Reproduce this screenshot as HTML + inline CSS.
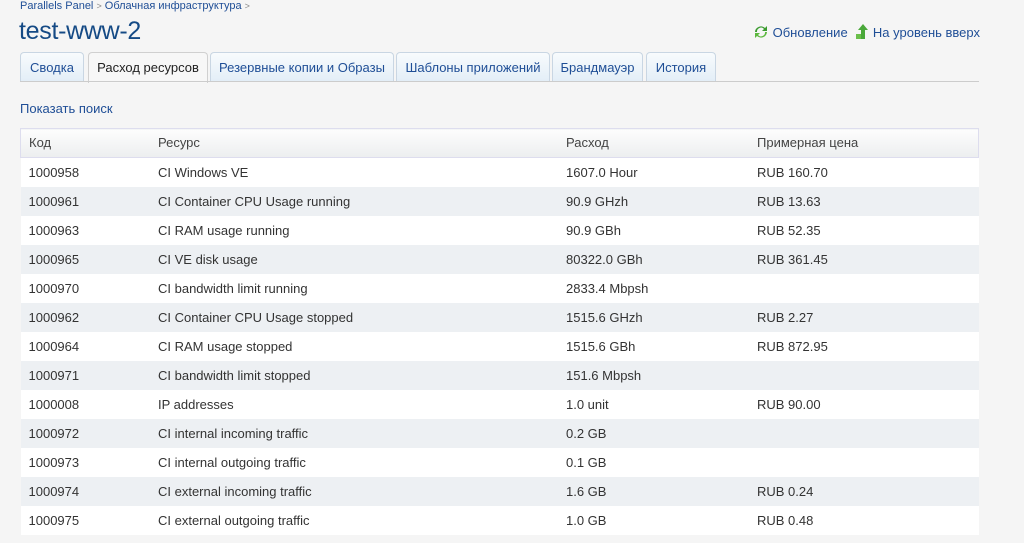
<!DOCTYPE html>
<html><head><meta charset="utf-8"><style>
body{margin:0;background:#f5f5f5;font-family:"Liberation Sans","DejaVu Sans",sans-serif;font-size:13px;color:#333;width:1024px;height:543px;overflow:hidden;position:relative}
a{color:#1f4e96;text-decoration:none}
.bc{position:absolute;left:20px;top:0;font-size:11px;color:#1f4e96}
.bc span{color:#888;font-size:9px}
h1{position:absolute;left:19px;top:17px;margin:0;font-weight:normal;font-size:25px;color:#154a85;letter-spacing:-0.3px}
.tr{position:absolute;right:44px;top:24px;font-size:13px}
.tr a{margin-left:4px}
.tab{position:absolute;top:52px;height:29px;line-height:29px;text-align:center;border:1px solid #c9d6e3;border-bottom:none;border-radius:4px 4px 0 0;background:linear-gradient(#f8fbfd,#e3eef7);color:#1f4e96;font-size:13px;box-sizing:border-box}
.tab.act{background:#f7f7f7;color:#222;border-color:#d0d0d0;height:31px}
.line{position:absolute;left:20px;top:81px;width:959px;height:1px;background:#ccc}
.ss{position:absolute;left:20px;top:101px}
table{position:absolute;left:20px;top:128px;width:959px;border-collapse:collapse}
td,th{height:28px;padding:0 0 1px 8px;text-align:left;font-weight:normal;font-size:13px;color:#333}
th{height:27px;background:linear-gradient(#fdfdfd,#eceeef);border-top:1px solid #dde;border-bottom:1px solid #dde;color:#444}
th:first-child{border-left:1px solid #dde}
th:last-child{border-right:1px solid #dde}
tr:nth-child(even) td{background:#fff}
tr:nth-child(odd) td{background:#edf0f3}
</style></head><body>
<div class="bc"><a>Parallels Panel</a> <span>&gt;</span> <a>Облачная инфраструктура</a> <span>&gt;</span></div>
<h1>test-www-2</h1>
<div class="tr"><svg width="16" height="14" viewBox="0 0 16 14" style="vertical-align:-2px"><path d="M2 7a6 6 0 0 1 10-4l2-2v5h-5l2-2a4 4 0 0 0-7 3z" fill="#3a9b2e"/><path d="M14 7a6 6 0 0 1-10 4l-2 2V8h5l-2 2a4 4 0 0 0 7-3z" fill="#5cb83e"/></svg><a>Обновление</a> &nbsp;<svg width="14" height="15" viewBox="0 0 14 15" style="vertical-align:-2px"><path d="M8 0l5 6h-3v9H6V6H3z" fill="#4aa83a"/><rect x="1" y="10" width="5" height="5" fill="#6bbf4a"/></svg><a>На уровень вверх</a></div>
<div class="tab" style="left:20px;width:64px">Сводка</div>
<div class="tab act" style="left:88px;width:120px">Расход ресурсов</div>
<div class="tab" style="left:210px;width:184px">Резервные копии и Образы</div>
<div class="tab" style="left:396px;width:154px">Шаблоны приложений</div>
<div class="tab" style="left:552px;width:91px">Брандмауэр</div>
<div class="tab" style="left:646px;width:70px">История</div>
<div class="line"></div>
<a class="ss">Показать поиск</a>
<table>
<tr><th style="width:121px">Код</th><th style="width:400px">Ресурс</th><th style="width:183px">Расход</th><th>Примерная цена</th></tr>
<tr><td>1000958</td><td>CI Windows VE</td><td>1607.0 Hour</td><td>RUB 160.70</td></tr>
<tr><td>1000961</td><td>CI Container CPU Usage running</td><td>90.9 GHzh</td><td>RUB 13.63</td></tr>
<tr><td>1000963</td><td>CI RAM usage running</td><td>90.9 GBh</td><td>RUB 52.35</td></tr>
<tr><td>1000965</td><td>CI VE disk usage</td><td>80322.0 GBh</td><td>RUB 361.45</td></tr>
<tr><td>1000970</td><td>CI bandwidth limit running</td><td>2833.4 Mbpsh</td><td></td></tr>
<tr><td>1000962</td><td>CI Container CPU Usage stopped</td><td>1515.6 GHzh</td><td>RUB 2.27</td></tr>
<tr><td>1000964</td><td>CI RAM usage stopped</td><td>1515.6 GBh</td><td>RUB 872.95</td></tr>
<tr><td>1000971</td><td>CI bandwidth limit stopped</td><td>151.6 Mbpsh</td><td></td></tr>
<tr><td>1000008</td><td>IP addresses</td><td>1.0 unit</td><td>RUB 90.00</td></tr>
<tr><td>1000972</td><td>CI internal incoming traffic</td><td>0.2 GB</td><td></td></tr>
<tr><td>1000973</td><td>CI internal outgoing traffic</td><td>0.1 GB</td><td></td></tr>
<tr><td>1000974</td><td>CI external incoming traffic</td><td>1.6 GB</td><td>RUB 0.24</td></tr>
<tr><td>1000975</td><td>CI external outgoing traffic</td><td>1.0 GB</td><td>RUB 0.48</td></tr>
</table>
</body></html>
